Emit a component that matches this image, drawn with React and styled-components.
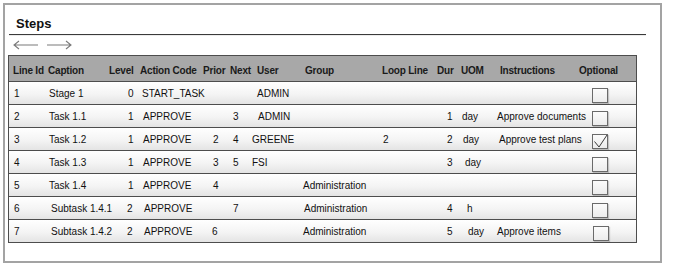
import styled, { createGlobalStyle } from 'styled-components';

const GlobalStyle = createGlobalStyle`
  body {
    margin: 0;
    background: #fff;
    font-family: "Liberation Sans", Arial, sans-serif;
    color: #111;
  }
`;

// column widths and text offsets, left to right
const columns = [
  { key: 'id', title: 'Line Id', w: 37, head: 4, pad: 5 },
  { key: 'caption', title: 'Caption', w: 59, head: 2, pad: 3 },
  { key: 'level', title: 'Level', w: 32, head: 4, pad: 23 },
  { key: 'action', title: 'Action Code', w: 63, head: 3, pad: 6 },
  { key: 'prior', title: 'Prior', w: 26, head: 3, pad: 13 },
  { key: 'next', title: 'Next', w: 24, head: 4, pad: 7 },
  { key: 'user', title: 'User', w: 50, head: 7, pad: 2 },
  { key: 'group', title: 'Group', w: 77, head: 5, pad: 3 },
  { key: 'loop', title: 'Loop Line', w: 57, head: 5, pad: 6 },
  { key: 'dur', title: 'Dur', w: 23, head: 3, pad: 13 },
  { key: 'uom', title: 'UOM', w: 37, head: 4, pad: 5 },
  { key: 'notes', title: 'Instructions', w: 81, head: 6, pad: 3 },
  { key: 'optional', title: 'Optional', w: 61, head: 4, pad: 17 },
];

const gridTemplate = columns.map((c) => `${c.w}px`).join(' ');

const steps = [
  { id: 1, caption: 'Stage 1', level: 0, action: 'START_TASK', user: 'ADMIN', shift: { user: 5, action: -1 } },
  { id: 2, caption: 'Task 1.1', level: 1, action: 'APPROVE', next: 3, user: 'ADMIN', dur: 1, uom: 'day', notes: 'Approve documents', shift: { user: 6 } },
  { id: 3, caption: 'Task 1.2', level: 1, action: 'APPROVE', prior: 2, next: 4, user: 'GREENE', loop: 2, dur: 2, uom: 'day', notes: 'Approve test plans', optional: true, shift: { uom: 1, notes: 2 } },
  { id: 4, caption: 'Task 1.3', level: 1, action: 'APPROVE', prior: 3, next: 5, user: 'FSI', dur: 3, uom: 'day', shift: { uom: 3 } },
  { id: 5, caption: 'Task 1.4', level: 1, action: 'APPROVE', prior: 4, group: 'Administration' },
  { id: 6, caption: 'Subtask 1.4.1', level: 2, action: 'APPROVE', next: 7, group: 'Administration', dur: 4, uom: 'h', shift: { caption: 2, level: -1, action: 1, group: 1, uom: 5 } },
  { id: 7, caption: 'Subtask 1.4.2', level: 2, action: 'APPROVE', prior: 6, group: 'Administration', dur: 5, uom: 'day', notes: 'Approve items', shift: { caption: 2, level: -1, action: 1, prior: -1, uom: 6, optional: 1 } },
];

const Frame = styled.div`
  box-sizing: border-box;
  width: 659px;
  height: 260px;
  margin: 3px 0 0 3px;
  border: 2px solid #a3a3a3;
  background: #fff;
`;

const TitleBar = styled.div`
  box-sizing: border-box;
  display: flex;
  align-items: flex-end;
  width: 637px;
  height: 30px;
  margin-left: 4px;
  padding: 0 0 2px 7px;
  border-bottom: 1px solid #3a3a3a;
  box-shadow: 0 1px 0 #ececec;
`;

const Title = styled.h2`
  margin: 0;
  font-size: 13px;
  line-height: 16px;
  font-weight: 700;
  color: #111;
`;

const Nav = styled.div`
  display: flex;
  align-items: center;
  gap: 7px;
  height: 20px;
  padding-left: 8px;
`;

const Arrow = styled.svg`
  display: block;
  width: 26px;
  height: 10px;
  color: #7a7a7a;
`;

const Table = styled.div`
  box-sizing: border-box;
  width: 629px;
  margin-left: 3px;
  border: 1px solid #4d4d4d;
  border-bottom: none;
`;

const Row = styled.div`
  display: grid;
  grid-template-columns: ${gridTemplate};
  align-items: center;
  height: ${(p) => (p.$head ? 25 : 22)}px;
  border-bottom: 1px solid #4d4d4d;
  background: ${(p) =>
    p.$head ? '#a8a8a8' : 'linear-gradient(#ffffff, #f4f4f4 55%, #e4e4e4)'};
  font-size: 10px;
  font-weight: ${(p) => (p.$head ? 700 : 400)};
  letter-spacing: ${(p) => (p.$head ? '-0.2px' : '0')};
  color: ${(p) => (p.$head ? '#1a1a1a' : '#111')};
`;

const Cell = styled.div`
  padding-left: ${(p) => p.$pad}px;
  white-space: nowrap;
  overflow: visible;
  padding-top: ${(p) => (p.$head ? 3 : 1)}px;
`;

const Box = styled.div`
  position: relative;
  box-sizing: border-box;
  width: 16px;
  height: 15px;
  margin-top: 4px;
  border: 1px solid #6a6a6a;
  background: linear-gradient(#fbfbfb, #ececec);
  box-shadow: 1px 1px 1px rgba(0, 0, 0, 0.18);
`;

const Tick = styled.svg`
  position: absolute;
  left: 0;
  top: -1px;
  width: 15px;
  height: 15px;
`;

const CheckBox = ({ checked }) => (
  <Box>
    {checked && (
      <Tick viewBox="0 0 15 15">
        <polyline points="1.5,7.5 6,13 14,1" fill="none" stroke="#3a3a3a" strokeWidth="1" />
      </Tick>
    )}
  </Box>
);

const LeftArrow = () => (
  <Arrow viewBox="0 0 26 10">
    <path d="M1 5H25M6 1L1 5L6 9" fill="none" stroke="currentColor" strokeWidth="1.1" />
  </Arrow>
);

const RightArrow = () => (
  <Arrow viewBox="0 0 26 10">
    <path d="M1 5H25M20 1L25 5L20 9" fill="none" stroke="currentColor" strokeWidth="1.1" />
  </Arrow>
);

export default function App() {
  return (
    <>
      <GlobalStyle />
      <Frame>
        <TitleBar>
          <Title>Steps</Title>
        </TitleBar>
        <Nav>
          <LeftArrow />
          <RightArrow />
        </Nav>
        <Table>
          <Row $head>
            {columns.map((c) => (
              <Cell key={c.key} $head $pad={c.head}>
                {c.title}
              </Cell>
            ))}
          </Row>
          {steps.map((step) => (
            <Row key={step.id}>
              {columns.map((c) => {
                const pad = c.pad + ((step.shift && step.shift[c.key]) || 0);
                return (
                  <Cell key={c.key} $pad={pad}>
                    {c.key === 'optional' ? <CheckBox checked={step.optional} /> : step[c.key]}
                  </Cell>
                );
              })}
            </Row>
          ))}
        </Table>
      </Frame>
    </>
  );
}
